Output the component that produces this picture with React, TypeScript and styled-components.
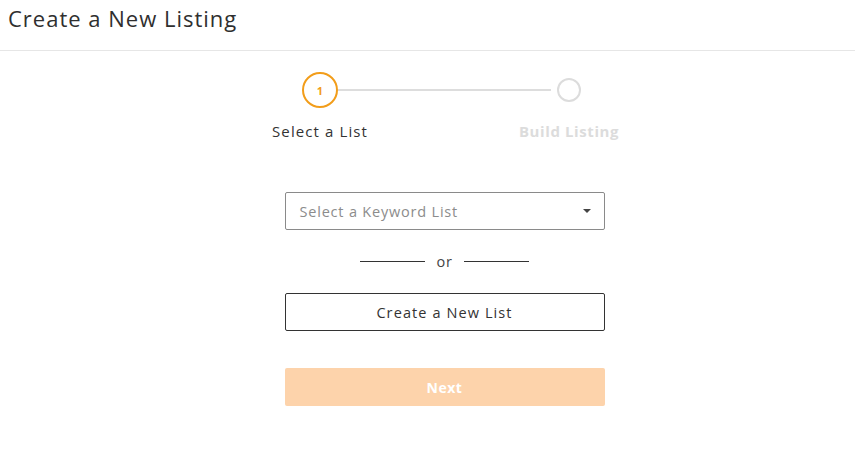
import styled, { createGlobalStyle } from "styled-components";

const GlobalStyle = createGlobalStyle`
  body {
    margin: 0;
    background: #fff;
    font-family: "Open Sans", "Liberation Sans", sans-serif;
    color: #333;
  }
`;

const Header = styled.header`
  height: 51px;
  border-bottom: 1px solid #e6e6e6;
  padding: 0 8px;
  box-sizing: border-box;
`;

const Title = styled.h1`
  margin: 0;
  padding-top: 3px;
  font-size: 22px;
  font-weight: 400;
  color: #2f2f2f;
  letter-spacing: 1px;
`;

const Content = styled.main`
  display: flex;
  flex-direction: column;
  align-items: center;
  padding-left: 34px;
`;

const Stepper = styled.div`
  display: flex;
  align-items: flex-start;
  margin-top: 20px;
`;

const Step = styled.div`
  display: flex;
  flex-direction: column;
  align-items: center;
  width: 120px;
`;

const CircleWrap = styled.div`
  height: 38px;
  display: flex;
  align-items: center;
`;

const Circle = styled.div<{ active?: boolean }>`
  box-sizing: border-box;
  width: ${(p) => (p.active ? 36 : 24)}px;
  height: ${(p) => (p.active ? 36 : 24)}px;
  border-radius: 50%;
  border: 2px solid ${(p) => (p.active ? "#f29d1a" : "#dcdcdc")};
  display: flex;
  align-items: center;
  justify-content: center;
  font-size: 11px;
  font-weight: 700;
  color: #f29d1a;
`;

const Connector = styled.div`
  width: 213px;
  height: 2px;
  background: #dddddd;
  margin: 18px -42px 0;
  position: relative;
  z-index: -1;
`;

const StepLabel = styled.span<{ active?: boolean }>`
  margin-top: 12px;
  font-size: 15px;
  font-weight: ${(p) => (p.active ? 500 : 700)};
  color: ${(p) => (p.active ? "#333" : "#dcdcdc")};
  letter-spacing: ${(p) => (p.active ? 1.1 : 0.6)}px;
  white-space: nowrap;
`;

const Form = styled.div`
  width: 320px;
  display: flex;
  flex-direction: column;
  align-items: stretch;
  margin-top: 51px;
`;

const Select = styled.div`
  height: 38px;
  box-sizing: border-box;
  border: 1px solid #8a8a8a;
  border-radius: 2px;
  display: flex;
  align-items: center;
  justify-content: space-between;
  padding: 0 13px 0 14px;
  font-size: 14.5px;
  letter-spacing: 0.8px;
  color: #8c8c8c;
`;

const Caret = styled.span`
  width: 0;
  height: 0;
  border-left: 4px solid transparent;
  border-right: 4px solid transparent;
  border-top: 4px solid #444;
`;

const Divider = styled.div`
  display: flex;
  align-items: center;
  justify-content: center;
  gap: 12px;
  height: 24px;
  margin: 19px 0 20px;
  font-size: 14.5px;
  letter-spacing: 0.6px;
  color: #444;
`;

const Rule = styled.span`
  width: 65px;
  height: 1px;
  background: #333;
`;

const OutlineButton = styled.button`
  height: 38px;
  border: 1px solid #333;
  border-radius: 2px;
  background: #fff;
  font-family: inherit;
  font-size: 14.5px;
  font-weight: 500;
  color: #333;
  letter-spacing: 1.1px;
`;

const PrimaryButton = styled.button`
  height: 38px;
  margin-top: 37px;
  border: none;
  border-radius: 2px;
  background: #fdd3ab;
  font-family: inherit;
  font-size: 14px;
  font-weight: 700;
  color: #fff;
  letter-spacing: 0.5px;
`;

export default function App() {
  return (
    <>
      <GlobalStyle />
      <Header>
        <Title>Create a New Listing</Title>
      </Header>
      <Content>
        <Stepper>
          <Step>
            <CircleWrap>
              <Circle active>1</Circle>
            </CircleWrap>
            <StepLabel active>Select a List</StepLabel>
          </Step>
          <Connector />
          <Step>
            <CircleWrap>
              <Circle />
            </CircleWrap>
            <StepLabel>Build Listing</StepLabel>
          </Step>
        </Stepper>
        <Form>
          <Select>
            <span>Select a Keyword List</span>
            <Caret />
          </Select>
          <Divider>
            <Rule />
            <span>or</span>
            <Rule />
          </Divider>
          <OutlineButton>Create a New List</OutlineButton>
          <PrimaryButton>Next</PrimaryButton>
        </Form>
      </Content>
    </>
  );
}
